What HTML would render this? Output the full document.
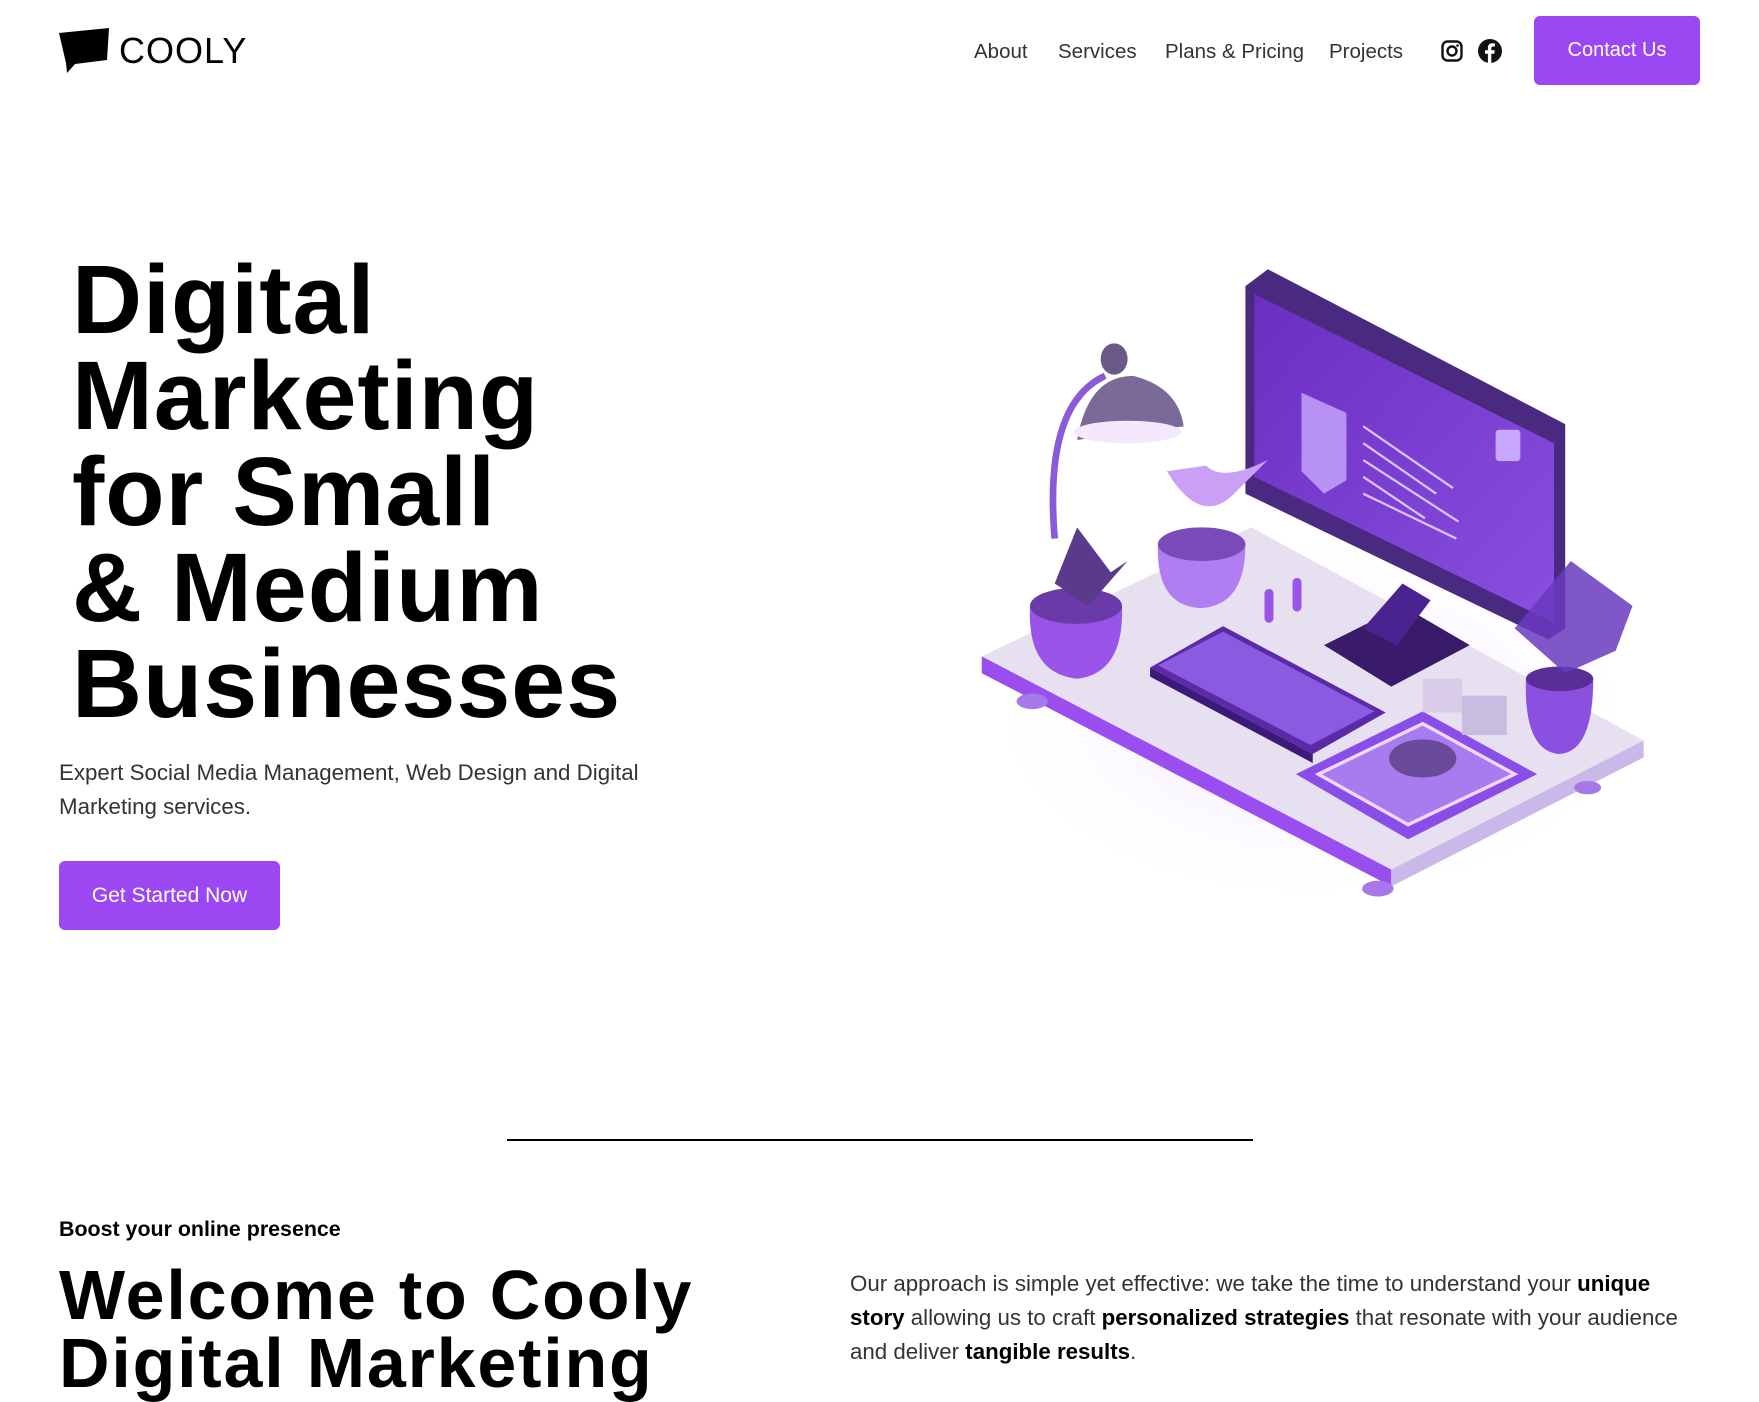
<!DOCTYPE html>
<html><head><meta charset="utf-8"><style>
*{margin:0;padding:0;box-sizing:border-box}
body{width:1759px;height:1400px;overflow:hidden;background:#fff;font-family:"Liberation Sans",sans-serif;color:#000;position:relative}
.abs{position:absolute}
.nav a{position:absolute;top:40px;font-size:20.5px;color:#333;text-decoration:none;white-space:nowrap}
.btn{position:absolute;background:#9b47f2;color:#fff;border-radius:6px;display:flex;align-items:center;justify-content:center;font-size:20px}
h1{position:absolute;left:72px;top:252px;font-size:97px;line-height:96px;font-weight:700;letter-spacing:1px}
</style></head><body>
<svg class="abs" style="left:59px;top:28px" width="52" height="46" viewBox="0 0 52 46"><path d="M0 5 L50 0 L48 32 L16 36 L8 45 L7 35 Z" fill="#000"/></svg>
<div class="abs" style="left:119px;top:30px;font-size:36px;letter-spacing:1px">COOLY</div>
<div class="nav">
<a style="left:974px">About</a>
<a style="left:1058px">Services</a>
<a style="left:1165px">Plans &amp; Pricing</a>
<a style="left:1329px">Projects</a>
</div>
<svg class="abs" style="left:1441px;top:40px" width="22" height="22" viewBox="0 0 22 22"><rect x="1.5" y="1.5" width="19" height="19" rx="5" fill="none" stroke="#111" stroke-width="2.4"/><circle cx="11" cy="11" r="4.5" fill="none" stroke="#111" stroke-width="2.4"/><circle cx="16.5" cy="5.5" r="1.3" fill="#111"/></svg>
<svg class="abs" style="left:1478px;top:39px" width="24" height="24" viewBox="0 0 24 24"><circle cx="12" cy="12" r="12" fill="#111"/><path d="M13.3 24V14.8h3l.5-3.5h-3.5V9.2c0-1 .3-1.7 1.8-1.7h1.8V4.4c-.3 0-1.4-.1-2.6-.1-2.6 0-4.4 1.6-4.4 4.5v2.5H7v3.5h2.9V24z" fill="#fff"/></svg>
<div class="btn" style="left:1534px;top:16px;width:166px;height:69px">Contact Us</div>

<h1>Digital<br>Marketing<br>for Small<br>&amp; Medium<br>Businesses</h1>
<div class="abs" style="left:59px;top:756px;font-size:22.3px;line-height:34px;color:#333;width:680px">Expert Social Media Management, Web Design and Digital<br>Marketing services.</div>
<div class="btn" style="left:59px;top:861px;width:221px;height:69px;font-size:21px">Get Started Now</div>

<svg class="abs" style="left:0;top:0" width="1759" height="1000" viewBox="0 0 1759 1000">
<defs><radialGradient id="gl" cx=".5" cy=".5" r=".5"><stop offset="0" stop-color="#e8d8ff"/><stop offset="1" stop-color="#fff" stop-opacity="0"/></radialGradient>
<linearGradient id="scr" x1="0" y1="0" x2="1" y2="1"><stop offset="0" stop-color="#6a2fc0"/><stop offset="1" stop-color="#8a4fe0"/></linearGradient></defs>
<g transform="scale(1.122)">
<ellipse cx="1170" cy="640" rx="300" ry="170" fill="url(#gl)"/>
<polygon points="875,585 1115,470 1465,660 1240,775" fill="#e6e0f0"/>
<polygon points="875,585 1240,775 1240,790 875,600" fill="#9a4ef0"/>
<polygon points="1240,775 1465,660 1465,675 1240,790" fill="#c9b8e8"/>
<ellipse cx="920" cy="625" rx="14" ry="7" fill="#a678e8"/><ellipse cx="1228" cy="792" rx="14" ry="7" fill="#a678e8"/><ellipse cx="1415" cy="702" rx="12" ry="6" fill="#a678e8"/>
<polygon points="1180,575 1250,540 1310,575 1240,612" fill="#3a1a6a"/>
<polygon points="1215,560 1250,520 1275,535 1245,575" fill="#4b2390"/>
<polygon points="1110,255 1130,240 1395,378 1395,560 1380,570 1110,440" fill="#4a2a80"/>
<polygon points="1118,262 1385,395 1385,555 1118,425" fill="url(#scr)"/>
<polygon points="1160,350 1200,368 1200,428 1180,440 1160,420" fill="#c9a8ff" opacity=".8"/>
<g stroke="#d8c4ff" stroke-width="2"><line x1="1215" y1="380" x2="1295" y2="435"/><line x1="1215" y1="395" x2="1280" y2="440"/><line x1="1215" y1="410" x2="1300" y2="465"/><line x1="1215" y1="425" x2="1270" y2="462"/><line x1="1215" y1="440" x2="1298" y2="480"/></g>
<rect x="1333" y="383" width="22" height="28" rx="3" fill="#c9a8ff"/>
<polygon points="1025,595 1090,558 1235,635 1170,672" fill="#5a2aa8"/>
<polygon points="1032,593 1090,563 1225,634 1168,664" fill="#8a5ae0"/>
<polygon points="1025,595 1170,672 1170,680 1025,603" fill="#3c1a7a"/>
<polygon points="1155,690 1268,634 1370,690 1255,748" fill="#8a4ee8"/>
<polygon points="1175,690 1268,645 1350,690 1255,735" fill="#a87cee" stroke="#f0d8ff" stroke-width="3"/>
<ellipse cx="1268" cy="676" rx="30" ry="17" fill="#6a4a9a"/>
<rect x="1268" y="605" width="35" height="30" fill="#d8cce8"/><rect x="1303" y="620" width="40" height="35" fill="#c8bce0"/>
<path d="M918 540 Q915 600 960 605 Q1002 600 1000 540 Z" fill="#9a55e8"/><ellipse cx="959" cy="540" rx="41" ry="16" fill="#6a3aa8"/>
<path d="M940 520 L960 470 L990 510 L1005 500 L970 540 Z" fill="#5a3a8a"/>
<path d="M1032 485 Q1030 540 1070 542 Q1110 540 1110 485 Z" fill="#b07ef0"/><ellipse cx="1071" cy="485" rx="39" ry="15" fill="#7a4ab8"/>
<path d="M1040 420 Q1070 470 1100 440 L1130 410 Q1090 430 1075 415 Z" fill="#c9a0f5"/>
<path d="M1360 605 Q1358 670 1390 672 Q1420 670 1420 605 Z" fill="#8a50e0"/><ellipse cx="1390" cy="605" rx="30" ry="11" fill="#5a2e98"/>
<path d="M1350 560 L1400 500 L1455 540 L1440 580 L1395 600 Z" fill="#6a3ac0" opacity=".85"/>
<path d="M940 480 Q930 360 985 335" fill="none" stroke="#8a5ad8" stroke-width="6"/>
<path d="M960 392 Q970 335 1010 335 Q1050 345 1055 380 Z" fill="#7a6a98"/>
<ellipse cx="1005" cy="385" rx="48" ry="10" fill="#f4e8ff"/>
<ellipse cx="993" cy="320" rx="12" ry="14" fill="#6a5a8a"/>
<rect x="1127" y="525" width="8" height="30" rx="4" fill="#9a55e8"/><rect x="1152" y="515" width="8" height="30" rx="4" fill="#9a55e8"/>
</g></svg>

<div class="abs" style="left:507px;top:1139px;width:746px;height:2px;background:#000"></div>
<div class="abs" style="left:59px;top:1217px;font-size:21.4px;font-weight:700">Boost your online presence</div>
<div class="abs" style="left:59px;top:1261px;font-size:70px;line-height:68px;font-weight:700;letter-spacing:1.8px;white-space:nowrap">Welcome to Cooly<br>Digital Marketing</div>
<div class="abs" style="left:850px;top:1267px;width:860px;font-size:22.3px;line-height:34px;color:#333;white-space:nowrap">Our approach is simple yet effective: we take the time to understand your <b style="color:#000">unique</b><br><b style="color:#000">story</b> allowing us to craft <b style="color:#000">personalized strategies</b> that resonate with your audience<br>and deliver <b style="color:#000">tangible results</b>.</div>
</body></html>
